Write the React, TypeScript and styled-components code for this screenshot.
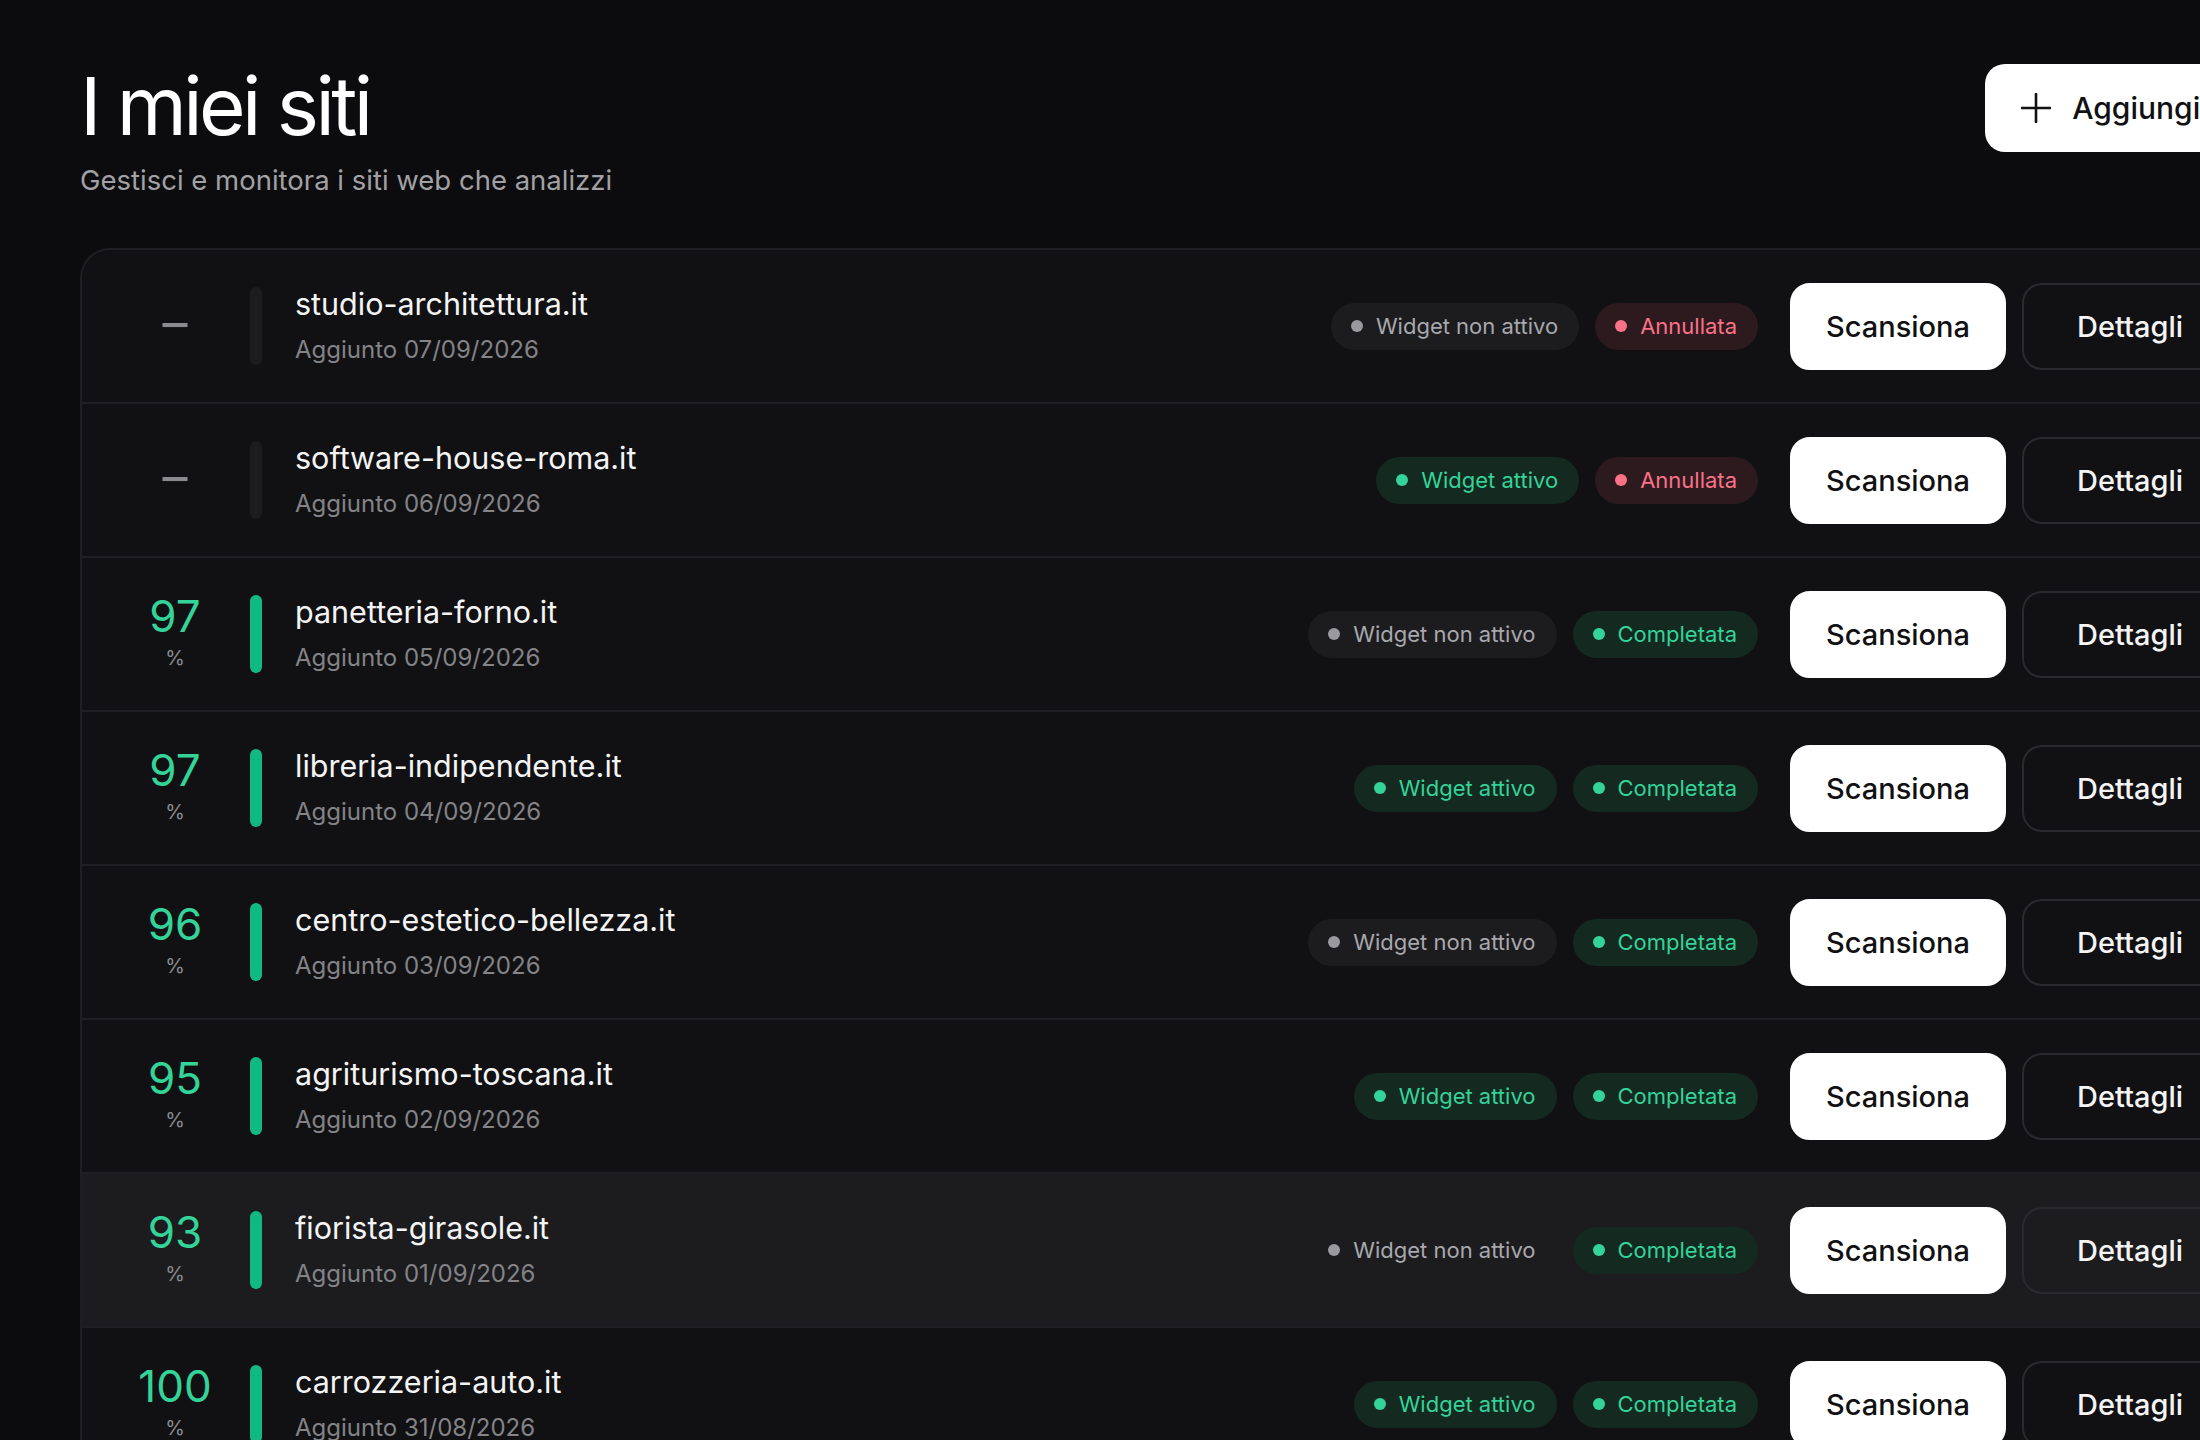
import styled, { createGlobalStyle } from "styled-components";

const GlobalStyle = createGlobalStyle`
  html, body {
    margin: 0;
    padding: 0;
    overflow: hidden;
    background: #0c0c0e;
  }
  body {
    font-family: Inter, "Noto Sans", sans-serif;
    color: #f4f4f5;
  }
  * {
    box-sizing: border-box;
  }
`;

const Page = styled.div`
  width: 2370px;
  height: 1440px;
  padding: 62px 80px 0 80px;
  overflow: hidden;
`;

const Header = styled.header`
  display: flex;
  justify-content: space-between;
  align-items: flex-start;
`;

const TitleGroup = styled.div`
  display: flex;
  flex-direction: column;
  gap: 11px;
`;

const Title = styled.h1`
  margin: 0;
  font-size: 80px;
  line-height: 88px;
  font-weight: 400;
  letter-spacing: -0.045em;
  color: #ffffff;
`;

const Subtitle = styled.p`
  margin: 0;
  font-size: 27.5px;
  line-height: 38px;
  color: #a1a1a6;
`;

const AddButton = styled.button`
  margin-top: 2px;
  height: 88px;
  padding: 0 30px 0 36px;
  display: flex;
  align-items: center;
  gap: 21px;
  border: none;
  border-radius: 20px;
  background: #ffffff;
  color: #111113;
  font-family: inherit;
  font-size: 30px;
  font-weight: 500;
  cursor: pointer;
`;

const SiteList = styled.ul`
  list-style: none;
  margin: 49px 0 0 0;
  padding: 0;
  border: 2px solid #1f1f23;
  border-bottom: none;
  border-radius: 30px 30px 0 0;
  background: #111113;
  overflow: hidden;
`;

const Row = styled.li<{ $active?: boolean }>`
  display: flex;
  align-items: center;
  height: 154px;
  padding: 0 50px 0 32px;
  border-bottom: 2px solid #1f1f23;
  background: ${(p) => (p.$active ? "#1c1c1f" : "transparent")};
`;

const Score = styled.div`
  width: 122px;
  padding-bottom: 6px;
  display: flex;
  flex-direction: column;
  align-items: center;
  gap: 10px;
`;

const ScoreValue = styled.span`
  font-size: 44px;
  line-height: 44px;
  color: #34d399;
`;

const ScoreUnit = styled.span`
  font-size: 20px;
  line-height: 20px;
  color: #8a8a8f;
`;

const NoScore = styled.span`
  font-size: 50px;
  line-height: 50px;
  color: #8a8a8f;
`;

const ScoreBar = styled.div<{ $filled: boolean }>`
  width: 12px;
  height: 78px;
  margin-left: 14px;
  border-radius: 6px;
  background: ${(p) => (p.$filled ? "#10b981" : "#1c1c1f")};
`;

const Info = styled.div`
  flex: 1;
  display: flex;
  flex-direction: column;
  gap: 12px;
  margin-left: 33px;
  min-width: 0;
`;

const Domain = styled.span`
  font-size: 30.5px;
  line-height: 36px;
  color: #f4f4f5;
`;

const Added = styled.span`
  font-size: 24px;
  line-height: 32px;
  color: #838388;
`;

const Badges = styled.div`
  display: flex;
  align-items: center;
  gap: 16px;
`;

type Tone = "neutral" | "success" | "danger";

const toneColors: Record<Tone, { bg: string; fg: string; dot: string }> = {
  neutral: { bg: "#1c1c1f", fg: "#a8a8ad", dot: "#9a9a9e" },
  success: { bg: "#14291f", fg: "#34d399", dot: "#34d399" },
  danger: { bg: "#2c1a1f", fg: "#fb7185", dot: "#fb7185" },
};

const Badge = styled.span<{ $tone: Tone }>`
  display: inline-flex;
  align-items: center;
  gap: 13px;
  height: 47px;
  padding: 0 21px 0 20px;
  border-radius: 999px;
  font-size: 22px;
  background: ${(p) => toneColors[p.$tone].bg};
  color: ${(p) => toneColors[p.$tone].fg};
  &::before {
    content: "";
    width: 12px;
    height: 12px;
    border-radius: 50%;
    background: ${(p) => toneColors[p.$tone].dot};
  }
`;

const Actions = styled.div`
  display: flex;
  align-items: center;
  gap: 16px;
  margin-left: 32px;
`;

const ActionButton = styled.button<{ $primary?: boolean }>`
  width: 216px;
  height: 87px;
  padding: 0;
  border-radius: 20px;
  border: 2px solid ${(p) => (p.$primary ? "#ffffff" : "#2a2a2e")};
  background: ${(p) => (p.$primary ? "#ffffff" : "transparent")};
  color: ${(p) => (p.$primary ? "#111113" : "#f4f4f5")};
  font-family: inherit;
  font-size: 29px;
  font-weight: 500;
  cursor: pointer;
`;

interface ISite {
  domain: string;
  added: string;
  score?: number;
  widget: boolean;
  scan: "Completata" | "Annullata";
}

const sites: ISite[] = [
  { domain: "studio-architettura.it", added: "07/09/2026", widget: false, scan: "Annullata" },
  { domain: "software-house-roma.it", added: "06/09/2026", widget: true, scan: "Annullata" },
  { domain: "panetteria-forno.it", added: "05/09/2026", score: 97, widget: false, scan: "Completata" },
  { domain: "libreria-indipendente.it", added: "04/09/2026", score: 97, widget: true, scan: "Completata" },
  { domain: "centro-estetico-bellezza.it", added: "03/09/2026", score: 96, widget: false, scan: "Completata" },
  { domain: "agriturismo-toscana.it", added: "02/09/2026", score: 95, widget: true, scan: "Completata" },
  { domain: "fiorista-girasole.it", added: "01/09/2026", score: 93, widget: false, scan: "Completata" },
  { domain: "carrozzeria-auto.it", added: "31/08/2026", score: 100, widget: true, scan: "Completata" },
];

function PlusIcon() {
  return (
    <svg width="30" height="30" viewBox="0 0 30 30" fill="none">
      <path d="M15 1v28M1 15h28" stroke="#111113" strokeWidth="2.6" strokeLinecap="round" />
    </svg>
  );
}

function App() {
  return (
    <>
      <GlobalStyle />
      <Page>
        <Header>
          <TitleGroup>
            <Title>I miei siti</Title>
            <Subtitle>Gestisci e monitora i siti web che analizzi</Subtitle>
          </TitleGroup>
          <AddButton>
            <PlusIcon />
            Aggiungi sito
          </AddButton>
        </Header>
        <SiteList>
          {sites.map((site, i) => (
            <Row key={site.domain} $active={i === 6}>
              <Score>
                {site.score !== undefined ? (
                  <>
                    <ScoreValue>{site.score}</ScoreValue>
                    <ScoreUnit>%</ScoreUnit>
                  </>
                ) : (
                  <NoScore>–</NoScore>
                )}
              </Score>
              <ScoreBar $filled={site.score !== undefined} />
              <Info>
                <Domain>{site.domain}</Domain>
                <Added>Aggiunto {site.added}</Added>
              </Info>
              <Badges>
                <Badge $tone={site.widget ? "success" : "neutral"}>
                  {site.widget ? "Widget attivo" : "Widget non attivo"}
                </Badge>
                <Badge $tone={site.scan === "Completata" ? "success" : "danger"}>{site.scan}</Badge>
              </Badges>
              <Actions>
                <ActionButton $primary>Scansiona</ActionButton>
                <ActionButton>Dettagli</ActionButton>
              </Actions>
            </Row>
          ))}
        </SiteList>
      </Page>
    </>
  );
}

export default App;
